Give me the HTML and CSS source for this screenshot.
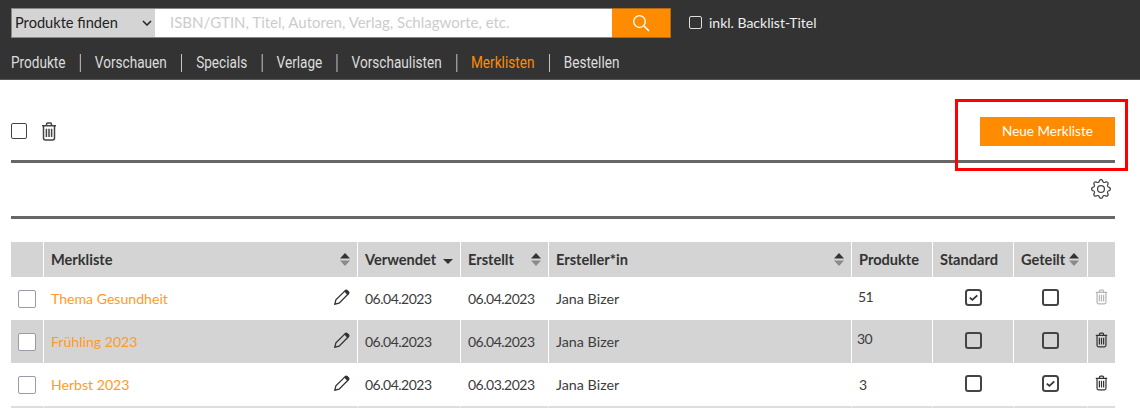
FILE: index.html
```html
<!DOCTYPE html>
<html>
	<head>
		<meta charset="UTF-8">
		<title>Merklisten</title>
		<link rel="stylesheet" href="styles.css">
	</head>
	<body>
		<svg class="defs" width="0" height="0">
			<symbol id="trash" viewBox="0 0 16 19">
				<path d="M1 3.7h14M5.5 3.4V2.2q0-1.2 1.2-1.2h2.6q1.2 0 1.2 1.2v1.2M2.5 3.7v12.4q0 1.9 1.9 1.9h7.2q1.9 0 1.9-1.9V3.7M5.4 6.8v8.2M8 6.8v8.2M10.6 6.8v8.2" fill="none" stroke="currentColor" stroke-width="1.5"/>
			</symbol>
			<symbol id="pencil" viewBox="0 0 16 16">
				<path d="M11.2 1.6 1.9 10.9.8 15.2l4.3-1.1 9.3-9.3q.9-1-.1-2l-1.1-1.1q-1-1-2-.1Z" fill="none" stroke="currentColor" stroke-width="1.3"/>
				<path d="M10.2 2.6q1-1.3 1.9-1.6.9-.2 1.7.7l.7.7q.9.9.6 1.7-.3.9-1.6 1.9Z" fill="currentColor"/>
			</symbol>
			<symbol id="sort" viewBox="0 0 10 13">
				<path d="M5 0l5 5.5H0Z" fill="#333"/>
				<path d="M5 13 0 7.5h10Z" fill="#8a8a8a"/>
			</symbol>
			<symbol id="check" viewBox="0 0 17 17">
				<rect x="1" y="1" width="15" height="15" rx="2.5" fill="none" stroke="#444" stroke-width="2"/>
				<path d="M4.8 8.6 7.4 10.9 12.3 6.3" fill="none" stroke="#333" stroke-width="1.8"/>
			</symbol>
		</svg>

		<div class="topbar">
			<div class="search">
				<div class="search_type">Produkte finden
					<svg class="chevron" width="10" height="6" viewBox="0 0 10 6"><path d="M1 1l4 4 4-4" fill="none" stroke="#222" stroke-width="1.5"/></svg>
				</div>
				<div class="search_input">ISBN/GTIN, Titel, Autoren, Verlag, Schlagworte, etc.</div>
				<div class="search_btn">
					<svg width="18" height="18" viewBox="0 0 18 18"><circle cx="7.5" cy="7.5" r="5.8" fill="none" stroke="#fff" stroke-width="1.3"/><path d="M11.8 11.8 17 17" stroke="#fff" stroke-width="1.5"/></svg>
				</div>
				<label class="backlist"><span class="box box_dark"></span>inkl. Backlist-Titel</label>
			</div>
			<ul class="nav">
				<li>Produkte</li>
				<li>Vorschauen</li>
				<li>Specials</li>
				<li>Verlage</li>
				<li>Vorschaulisten</li>
				<li class="active">Merklisten</li>
				<li>Bestellen</li>
			</ul>
		</div>

		<div class="content">
			<div class="toolbar">
				<div class="toolbar_left">
					<span class="box box_big"></span>
					<svg class="ico_trash_big"><use href="#trash"/></svg>
				</div>
				<a href="#" class="new_btn">Neue Merkliste</a>
			</div>
			<div class="settings">
				<svg width="20" height="20" viewBox="0 0 16 16" fill="#444"><path d="M8 4.754a3.246 3.246 0 1 0 0 6.492 3.246 3.246 0 0 0 0-6.492zM5.754 8a2.246 2.246 0 1 1 4.492 0 2.246 2.246 0 0 1-4.492 0z"/><path d="M9.796 1.343c-.527-1.79-3.065-1.79-3.592 0l-.094.319a.873.873 0 0 1-1.255.52l-.292-.16c-1.64-.892-3.433.902-2.54 2.541l.159.292a.873.873 0 0 1-.52 1.255l-.319.094c-1.79.527-1.79 3.065 0 3.592l.319.094a.873.873 0 0 1 .52 1.255l-.16.292c-.892 1.64.901 3.434 2.541 2.54l.292-.159a.873.873 0 0 1 1.255.52l.094.319c.527 1.79 3.065 1.79 3.592 0l.094-.319a.873.873 0 0 1 1.255-.52l.292.16c1.64.893 3.434-.902 2.54-2.541l-.159-.292a.873.873 0 0 1 .52-1.255l.319-.094c1.79-.527 1.79-3.065 0-3.592l-.319-.094a.873.873 0 0 1-.52-1.255l.16-.292c.893-1.64-.902-3.433-2.541-2.54l-.292.159a.873.873 0 0 1-1.255-.52l-.094-.319zm-2.633.283c.246-.835 1.428-.835 1.674 0l.094.319a1.873 1.873 0 0 0 2.693 1.115l.291-.16c.764-.415 1.6.42 1.184 1.185l-.159.292a1.873 1.873 0 0 0 1.116 2.692l.318.094c.835.246.835 1.428 0 1.674l-.319.094a1.873 1.873 0 0 0-1.115 2.693l.16.291c.415.764-.42 1.6-1.185 1.184l-.291-.159a1.873 1.873 0 0 0-2.693 1.116l-.094.318c-.246.835-1.428.835-1.674 0l-.094-.319a1.873 1.873 0 0 0-2.692-1.115l-.292.16c-.764.415-1.6-.42-1.184-1.185l.159-.291A1.873 1.873 0 0 0 1.945 8.93l-.319-.094c-.835-.246-.835-1.428 0-1.674l.319-.094A1.873 1.873 0 0 0 3.06 4.377l-.16-.292c-.415-.764.42-1.6 1.185-1.184l.292.159a1.873 1.873 0 0 0 2.692-1.115l.094-.319z"/></svg>
			</div>

			<table class="lists">
				<colgroup>
					<col class="c_sel"><col class="c_name"><col class="c_used"><col class="c_made"><col class="c_user"><col class="c_prod"><col class="c_std"><col class="c_shared"><col class="c_del">
				</colgroup>
				<thead>
					<tr>
						<th></th>
						<th><div class="th_in">Merkliste<svg class="sort"><use href="#sort"/></svg></div></th>
						<th><div class="th_in">Verwendet<svg class="sort_down" width="10" height="5" viewBox="0 0 10 5"><path d="M5 5 0 0h10Z" fill="#333"/></svg></div></th>
						<th><div class="th_in">Erstellt<svg class="sort"><use href="#sort"/></svg></div></th>
						<th><div class="th_in">Ersteller*in<svg class="sort"><use href="#sort"/></svg></div></th>
						<th>Produkte</th>
						<th>Standard</th>
						<th><div class="th_in th_tight">Geteilt<svg class="sort"><use href="#sort"/></svg></div></th>
						<th></th>
					</tr>
				</thead>
				<tbody>
					<tr>
						<td class="center"><span class="box box_sel"></span></td>
						<td><div class="name"><a href="#">Thema Gesundheit</a><svg class="ico_pencil"><use href="#pencil"/></svg></div></td>
						<td class="date">06.04.2023</td>
						<td class="date">06.04.2023</td>
						<td>Jana Bizer</td>
						<td class="date num_a">51</td>
						<td class="center"><svg class="ico_check"><use href="#check"/></svg></td>
						<td class="center"><span class="box box_flag"></span></td>
						<td class="center"><svg class="ico_trash disabled"><use href="#trash"/></svg></td>
					</tr>
					<tr class="odd">
						<td class="center"><span class="box box_sel"></span></td>
						<td><div class="name"><a href="#">Frühling 2023</a><svg class="ico_pencil"><use href="#pencil"/></svg></div></td>
						<td class="date">06.04.2023</td>
						<td class="date">06.04.2023</td>
						<td>Jana Bizer</td>
						<td class="date num_b">30</td>
						<td class="center"><span class="box box_flag"></span></td>
						<td class="center"><span class="box box_flag"></span></td>
						<td class="center"><svg class="ico_trash"><use href="#trash"/></svg></td>
					</tr>
					<tr class="last">
						<td class="center"><span class="box box_sel"></span></td>
						<td><div class="name"><a href="#">Herbst 2023</a><svg class="ico_pencil"><use href="#pencil"/></svg></div></td>
						<td class="date">06.04.2023</td>
						<td class="date">06.03.2023</td>
						<td>Jana Bizer</td>
						<td class="date num_c">3</td>
						<td class="center"><span class="box box_flag"></span></td>
						<td class="center"><svg class="ico_check"><use href="#check"/></svg></td>
						<td class="center"><svg class="ico_trash"><use href="#trash"/></svg></td>
					</tr>
				</tbody>
			</table>
		</div>

		<div class="highlight"></div>
	</body>
</html>
```

FILE: styles.css
```css
* {
	margin: 0;
	padding: 0;
	box-sizing: border-box;
}
body {
	font-family: "Lato", "Noto Sans", sans-serif;
	font-size: 14.3px;
	color: #3c3c3c;
	background: #fff;
	overflow: hidden;
}
a {
	text-decoration: none;
}
.defs {
	position: absolute;
}

.topbar {
	height: 80px;
	background: #333;
	padding: 8px 11px 0;
	border-bottom: 1px solid #555;
}
.search {
	display: flex;
	height: 30px;
	align-items: stretch;
}
.search_type {
	width: 144px;
	background: #d4d4d4;
	border: 1px solid #888;
	border-right: 0;
	color: #222;
	font-size: 14.6px;
	line-height: 27px;
	padding-left: 3px;
	position: relative;
}
.chevron {
	position: absolute;
	right: 3px;
	top: 11px;
}
.search_input {
	width: 457px;
	background: #fff;
	border: 1px solid #888;
	border-left: 0;
	border-right: 0;
	color: #ccc;
	font-size: 15px;
	line-height: 27px;
	padding-left: 15px;
}
.search_btn {
	width: 59px;
	background: #ff8c00;
	border: 1px solid #b86a0c;
	border-left: 0;
	display: flex;
	align-items: center;
	justify-content: center;
}
.backlist {
	display: flex;
	align-items: center;
	gap: 7px;
	margin-left: 18px;
	color: #eee;
	font-size: 14px;
	padding-bottom: 2px;
}
.box {
	display: inline-block;
	border-radius: 2px;
	vertical-align: middle;
}
.box_dark {
	width: 13px;
	height: 13px;
	border: 1.5px solid #ddd;
}
/* no narrow font installed, so the whole bar is squeezed */
.nav {
	list-style: none;
	display: flex;
	width: 1300px;
	margin-top: 16px;
	font-family: "Roboto", sans-serif;
	font-size: 16px;
	line-height: 18px;
	color: #ddd;
	transform: scaleX(.85);
	transform-origin: left center;
}
.nav li {
	padding-right: 17px;
	margin-right: 16.5px;
	border-right: 1px solid #ddd;
}
.nav li:last-child {
	border-right: 0;
}
.nav .active {
	color: #ff8c00;
}

.content {
	padding: 0 25px 0 11px;
}
.toolbar {
	height: 83px;
	display: flex;
	align-items: center;
	justify-content: space-between;
	border-bottom: 3px solid #666;
	padding-top: 22px;
}
.toolbar_left {
	display: flex;
	align-items: center;
	gap: 14px;
}
.box_big {
	width: 16px;
	height: 16px;
	border: 1.5px solid #444;
}
.ico_trash_big {
	width: 16px;
	height: 19px;
	color: #444;
}
.new_btn {
	width: 135px;
	height: 29px;
	line-height: 29px;
	text-align: center;
	background: #ff8c00;
	color: #fff;
	font-size: 13.5px;
}
.settings {
	height: 56px;
	border-bottom: 3px solid #666;
	display: flex;
	justify-content: flex-end;
	padding: 16px 4px 0 0;
}

.lists {
	width: 1104px;
	margin-top: 23px;
	border-collapse: separate;
	border-spacing: 0;
	table-layout: fixed;
}
.c_sel { width: 33px; }
.c_name { width: 314px; }
.c_used { width: 103px; }
.c_made { width: 88px; }
.c_user { width: 303px; }
.c_prod { width: 81px; }
.c_std { width: 81px; }
.c_shared { width: 74px; }
.c_del { width: 27px; }
.lists th,
.lists td {
	border-right: 1px solid #fff;
	text-align: left;
	padding-left: 7px;
}
.lists th:last-child,
.lists td:last-child {
	border-right: 0;
}
.lists th {
	height: 35px;
	background: #d4d4d4;
	color: #333;
	font-weight: bold;
	font-size: 14.6px;
}
.lists td {
	height: 43px;
}
.lists .last td {
	height: 45px;
	border-bottom: 2px solid #ddd;
}
.odd td {
	background: #d4d4d4;
}
.lists .center {
	text-align: center;
	padding-left: 0;
}
.lists .date {
	font-size: 14px;
	letter-spacing: -.5px;
}
.th_in {
	display: flex;
	align-items: center;
	justify-content: space-between;
	padding-right: 7px;
}
.th_tight {
	justify-content: flex-start;
	gap: 4px;
}
.sort {
	width: 10px;
	height: 13px;
}
.sort_down {
	margin-top: 3px;
}
.name {
	display: flex;
	align-items: center;
	justify-content: space-between;
	padding-right: 7px;
}
.name a {
	color: #ff9a26;
	font-size: 14.1px;
	padding-bottom: 1px;
}
.ico_pencil {
	width: 16px;
	height: 16px;
	color: #333;
	margin-bottom: 4px;
}
.lists .num_a { padding: 0 0 4px 6px; }
.lists .num_b { padding: 0 0 7px 5px; }
.lists .num_c { padding-left: 7px; }
.box_sel {
	width: 18px;
	height: 18px;
	border: 1.5px solid #9a9aa8;
	background: #fff;
}
.box_flag {
	width: 17px;
	height: 17px;
	border: 2px solid #444;
	border-radius: 3px;
	margin-bottom: 2px;
}
.ico_check {
	width: 17px;
	height: 17px;
	vertical-align: middle;
	margin-bottom: 2px;
}
.ico_trash {
	width: 13px;
	height: 16px;
	color: #333;
	vertical-align: middle;
	margin-bottom: 4px;
}
.ico_trash.disabled {
	color: #b5b5b5;
}

.highlight {
	position: absolute;
	left: 955px;
	top: 99px;
	width: 173px;
	height: 72px;
	border: 3px solid #f00;
}
```
